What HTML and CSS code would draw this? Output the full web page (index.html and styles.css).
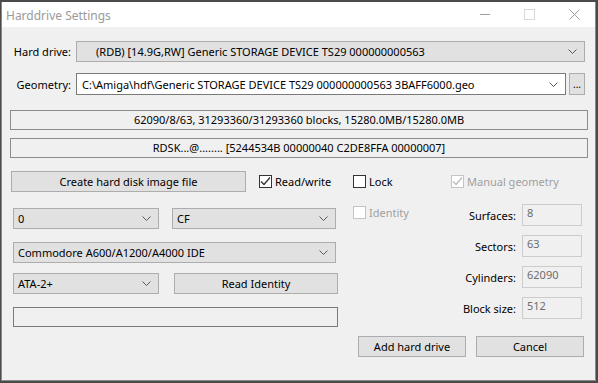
FILE: index.html
```html
<!DOCTYPE html>
<html lang="en">
<head>
  <meta charset="UTF-8">
  <title>Harddrive Settings</title>
  <link rel="stylesheet" href="styles.css">
</head>
<body>

<div class="window">
  <div class="titlebar">
    <span class="title">Harddrive Settings</span>
    <div class="caption">
      <span class="cap-min"></span>
      <span class="cap-max"></span>
      <svg class="cap-close" width="11" height="11" viewBox="0 0 11 11"><path d="M0.5 0.5 L10.5 10.5 M10.5 0.5 L0.5 10.5" stroke="#a0a0a0" stroke-width="1" fill="none"/></svg>
    </div>
  </div>

  <div class="content">
    <div class="row hd-row">
      <label class="lbl">Hard drive:</label>
      <div class="combo hd-combo">
        <span class="combo-text indent">(RDB) [14.9G,RW] Generic STORAGE DEVICE TS29 000000000563</span>
        <svg class="chev" width="9" height="5" viewBox="0 0 9 5"><path d="M0.5 0.5 L4.5 4.5 L8.5 0.5" stroke="#5a5a5a" fill="none"/></svg>
      </div>
    </div>

    <div class="row geo-row">
      <label class="lbl">Geometry:</label>
      <div class="combo edit geo-combo">
        <span class="combo-text">C:\Amiga\hdf\Generic STORAGE DEVICE TS29 000000000563 3BAFF6000.geo</span>
        <svg class="chev" width="9" height="5" viewBox="0 0 9 5"><path d="M0.5 0.5 L4.5 4.5 L8.5 0.5" stroke="#5a5a5a" fill="none"/></svg>
      </div>
      <button class="btn dots">...</button>
    </div>

    <div class="info info-first">62090/8/63, 31293360/31293360 blocks, 15280.0MB/15280.0MB</div>
    <div class="info info-second">RDSK...@........ [5244534B 00000040 C2DE8FFA 00000007]</div>

    <div class="row action-row">
      <button class="btn create">Create hard disk image file</button>
      <label class="check rw">
        <span class="box"><svg width="11" height="11" viewBox="0 0 11 11"><path d="M1 5.5 L4 8.5 L10 1.5" stroke="#333" stroke-width="1.3" fill="none"/></svg></span>
        Read/write
      </label>
      <label class="check lock"><span class="box"></span>Lock</label>
      <label class="check disabled">
        <span class="box"><svg width="11" height="11" viewBox="0 0 11 11"><path d="M1 5.5 L4 8.5 L10 1.5" stroke="#bcbcbc" stroke-width="1.3" fill="none"/></svg></span>
        Manual geometry
      </label>
    </div>

    <div class="lower">
      <div class="lower-left">
        <div class="row sel-row">
          <div class="combo unit"><span class="combo-text">0</span><svg class="chev" width="9" height="5" viewBox="0 0 9 5"><path d="M0.5 0.5 L4.5 4.5 L8.5 0.5" stroke="#5a5a5a" fill="none"/></svg></div>
          <div class="combo kind"><span class="combo-text">CF</span><svg class="chev" width="9" height="5" viewBox="0 0 9 5"><path d="M0.5 0.5 L4.5 4.5 L8.5 0.5" stroke="#5a5a5a" fill="none"/></svg></div>
        </div>
        <div class="combo ctrl"><span class="combo-text">Commodore A600/A1200/A4000 IDE</span><svg class="chev" width="9" height="5" viewBox="0 0 9 5"><path d="M0.5 0.5 L4.5 4.5 L8.5 0.5" stroke="#5a5a5a" fill="none"/></svg></div>
        <div class="row sel-row ata-row">
          <div class="combo unit"><span class="combo-text">ATA-2+</span><svg class="chev" width="9" height="5" viewBox="0 0 9 5"><path d="M0.5 0.5 L4.5 4.5 L8.5 0.5" stroke="#5a5a5a" fill="none"/></svg></div>
          <button class="btn identity-btn">Read Identity</button>
        </div>
        <div class="empty-box"></div>
      </div>

      <div class="lower-mid">
        <label class="check disabled"><span class="box"></span>Identity</label>
      </div>

      <div class="geom">
        <label>Surfaces:</label><input value="8" disabled>
        <label>Sectors:</label><input value="63" disabled>
        <label>Cylinders:</label><input value="62090" disabled>
        <label>Block size:</label><input value="512" disabled>
      </div>
    </div>

    <div class="footer">
      <button class="btn footer-btn">Add hard drive</button>
      <button class="btn footer-btn">Cancel</button>
    </div>
  </div>
</div>

</body>
</html>
```

FILE: styles.css
```css
body {
  margin: 0;
  background: #4a4a4a;
  font-family: "Noto Sans", "Open Sans", sans-serif;
  font-size: 11px;
  color: #000;
}
.window {
  margin: 2px 2px 0 1px;
  height: 378px;
  background: #f0f0f0;
  border: 1px solid #8a8a8a;
  border-top: none;
}
.titlebar {
  height: 25px;
  background: #fff;
  display: flex;
  align-items: center;
  justify-content: space-between;
}
.title {
  color: #9a9a9a;
  font-size: 12px;
  margin-left: 4px;
  margin-top: 1px;
}
.caption {
  display: flex;
  align-items: center;
  gap: 34px;
  margin-right: 15px;
}
.cap-min {
  width: 10px;
  height: 1px;
  background: #a0a0a0;
}
.cap-max {
  width: 9px;
  height: 9px;
  border: 1px solid #d8d8d8;
}
.content {
  padding: 0 8px 0 8px;
}
.row {
  display: flex;
  align-items: center;
}
.hd-row {
  margin-top: 14px;
}
.lbl {
  width: 61px;
  flex-shrink: 0;
  white-space: nowrap;
  text-align: right;
  margin-right: 5px;
}
.combo {
  height: 21px;
  flex-shrink: 0;
  box-sizing: border-box;
  background: #e1e1e1;
  border: 1px solid #adadad;
  display: flex;
  align-items: center;
  justify-content: space-between;
  padding: 0 7px 0 4px;
  white-space: nowrap;
  overflow: hidden;
}
.combo .indent {
  margin-left: 15px;
}
.hd-combo {
  width: 509px;
}
.geo-row {
  margin-top: 11px;
}
.edit {
  background: #fff;
  border-color: #7a7a7a;
  padding-left: 5px;
  height: 22px;
}
.geo-combo {
  width: 490px;
}
.btn {
  font: inherit;
  color: #000;
  background: #e1e1e1;
  border: 1px solid #adadad;
  height: 21px;
  padding: 0;
  flex-shrink: 0;
}
.dots {
  width: 16px;
  height: 22px;
  margin-left: 3px;
  font-size: 10px;
  line-height: 12px;
}
.info {
  width: 578px;
  height: 20px;
  box-sizing: border-box;
  border: 1px solid #8c8c8c;
  text-align: center;
  line-height: 18px;
}
.info-first {
  margin-top: 15px;
}
.info-second {
  margin-top: 8px;
}
.action-row {
  margin-top: 13px;
}
.create {
  width: 235px;
  margin-left: 1px;
}
.check {
  display: flex;
  align-items: center;
  gap: 3px;
  white-space: nowrap;
}
.box {
  width: 13px;
  height: 13px;
  flex-shrink: 0;
  box-sizing: border-box;
  border: 1px solid #333;
  background: #fff;
  display: flex;
  align-items: center;
  justify-content: center;
}
.rw {
  margin-left: 13px;
  width: 94px;
}
.lock {
  width: 98px;
}
.disabled {
  color: #a0a0a0;
}
.disabled .box {
  border-color: #c4c4c4;
}
.lower {
  display: flex;
  margin-top: 12px;
}
.lower-left {
  margin-left: 3px;
  width: 325px;
  flex-shrink: 0;
  display: flex;
  flex-direction: column;
}
.sel-row {
  margin-top: 4px;
  justify-content: space-between;
}
.unit {
  width: 146px;
}
.kind {
  width: 164px;
  margin-right: 2px;
}
.ctrl {
  width: 323px;
  margin-top: 13px;
}
.ata-row {
  margin-top: 10px;
}
.identity-btn {
  width: 164px;
}
.empty-box {
  margin-top: 13px;
  height: 20px;
  box-sizing: border-box;
  border: 1px solid #7a7a7a;
}
.lower-mid {
  flex: 1;
  padding-left: 15px;
  padding-top: 1px;
}
.geom {
  display: grid;
  grid-template-columns: auto 60px;
  column-gap: 6px;
  row-gap: 9px;
  align-items: center;
  margin-right: 5px;
  align-self: flex-start;
}
.geom label {
  text-align: right;
  white-space: nowrap;
}
.geom input {
  font: inherit;
  color: #6d6d6d;
  background: #f0f0f0;
  border: 1px solid #cccccc;
  height: 22px;
  box-sizing: border-box;
  padding: 0 0 6px 4px;
  width: 60px;
}
.footer {
  display: flex;
  justify-content: flex-end;
  gap: 10px;
  margin-top: 9px;
  margin-right: 3px;
}
.footer-btn {
  width: 108px;
}
```
